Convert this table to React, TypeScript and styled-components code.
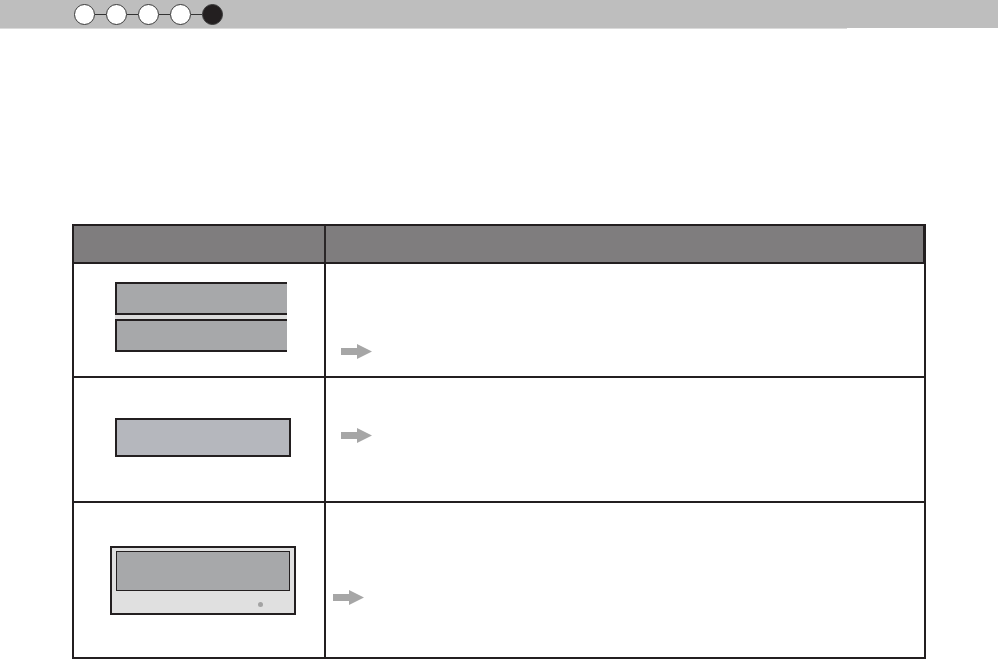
import styled, { createGlobalStyle } from "styled-components"

const GlobalStyle = createGlobalStyle`
  body {
    margin: 0;
    background: #ffffff;
    font-family: "Liberation Sans", Arial, sans-serif;
  }
`

const rows = [
  { height: 114, arrowLeft: 16, arrowTop: 81 },
  { height: 125, arrowLeft: 16, arrowTop: 51 },
  { height: 156, arrowLeft: 8, arrowTop: 88 },
]

const Arrow = () => (
  <ArrowSvg width="34" height="18" viewBox="0 0 34 18">
    <defs>
      <filter id="soft" x="-20%" y="-30%" width="140%" height="160%">
        <feGaussianBlur stdDeviation="0.6" />
      </filter>
    </defs>
    <path d="M1 5 H17 V1 L32 8.5 L17 16 V12 H1 Z" fill="#a6a6a6" filter="url(#soft)" />
  </ArrowSvg>
)

export default function App() {
  return (
    <Page>
      <GlobalStyle />
      <TopBar>
        <Steps>
          {[0, 1, 2, 3, 4].map((i) => (
            <StepItem key={i}>
              {i > 0 && <Connector />}
              <Step $active={i === 4} />
            </StepItem>
          ))}
        </Steps>
      </TopBar>
      <UnderLine />
      <Table>
        <Header>
          <HeadLeft />
          <HeadRight />
        </Header>
        {rows.map((row, index) => (
          <Row key={index} $height={row.height}>
            <LeftCell>
              {index === 0 && (
                <StackWrap>
                  <Panel />
                  <PanelGap />
                  <Panel />
                </StackWrap>
              )}
              {index === 1 && <SingleWrap><Display /></SingleWrap>}
              {index === 2 && (
                <DeviceWrap>
                  <Device>
                    <DeviceScreen />
                    <DeviceFoot>
                      <Led />
                    </DeviceFoot>
                  </Device>
                </DeviceWrap>
              )}
            </LeftCell>
            <RightCell $pl={row.arrowLeft} $pt={row.arrowTop}>
              <Arrow />
            </RightCell>
          </Row>
        ))}
      </Table>
    </Page>
  )
}

const Page = styled.div`
  width: 998px;
  height: 659px;
  overflow: hidden;
`
const TopBar = styled.div`
  height: 28px;
  background: #bebebe;
  display: flex;
  align-items: center;
`
const UnderLine = styled.div`
  width: 847px;
  height: 1px;
  background: #dadada;
`
const Steps = styled.div`
  display: flex;
  align-items: center;
  margin-left: 74px;
`
const StepItem = styled.div`
  display: flex;
  align-items: center;
`
const Connector = styled.div`
  width: 11px;
  height: 1px;
  background: #333333;
`
const Step = styled.div<{ $active: boolean }>`
  width: 19px;
  height: 19px;
  border-radius: 50%;
  border: 1px solid #3a3a3a;
  background: ${(p) => (p.$active ? "#231f20" : "#ffffff")};
`
const Table = styled.div`
  margin: 195px 0 0 72px;
  width: 854px;
  border-left: 2px solid #231f20;
  border-right: 2px solid #231f20;
  box-sizing: border-box;
`
const Header = styled.div`
  display: flex;
  height: 40px;
  border-top: 2px solid #231f20;
  border-bottom: 2px solid #231f20;
  box-sizing: border-box;
  background: #7f7d7e;
  margin-right: -2px;
  border-right: 3px solid #231f20;
`
const HeadLeft = styled.div`
  width: 250px;
  border-right: 2px solid #2a2627;
`
const HeadRight = styled.div`
  flex: 1;
`
const Row = styled.div<{ $height: number }>`
  display: flex;
  height: ${(p) => p.$height}px;
  border-bottom: 2px solid #231f20;
  box-sizing: border-box;
`
const LeftCell = styled.div`
  width: 250px;
  border-right: 2px solid #231f20;
`
const RightCell = styled.div<{ $pl: number; $pt: number }>`
  flex: 1;
  padding: ${(p) => p.$pt - 2}px 0 0 ${(p) => p.$pl - 2}px;
`
const ArrowSvg = styled.svg`
  display: block;
`
const StackWrap = styled.div`
  padding: 18px 0 0 41px;
  display: flex;
  flex-direction: column;
`
const Panel = styled.div`
  width: 172px;
  height: 33px;
  box-sizing: border-box;
  background: #a7a8aa;
  border: 2px solid #231f20;
  border-right: none;
`
const PanelGap = styled.div`
  width: 172px;
  height: 4px;
  background: #dcdcdc;
`
const SingleWrap = styled.div`
  padding: 40px 0 0 41px;
`
const Display = styled.div`
  width: 176px;
  height: 39px;
  box-sizing: border-box;
  background: #b5b7bd;
  border: 2px solid #231f20;
`
const DeviceWrap = styled.div`
  padding: 43px 0 0 36px;
`
const Device = styled.div`
  width: 186px;
  height: 69px;
  box-sizing: border-box;
  background: #e0e0e0;
  border: 2px solid #231f20;
  padding: 3px 4px 0 4px;
  display: flex;
  flex-direction: column;
`
const DeviceScreen = styled.div`
  height: 40px;
  box-sizing: border-box;
  background: #a7a8aa;
  border: 1.5px solid #231f20;
`
const DeviceFoot = styled.div`
  flex: 1;
  display: flex;
  justify-content: flex-end;
  align-items: center;
  padding-right: 27px;
  padding-top: 4px;
`
const Led = styled.div`
  width: 5px;
  height: 5px;
  border-radius: 50%;
  background: #a3a3a3;
`
